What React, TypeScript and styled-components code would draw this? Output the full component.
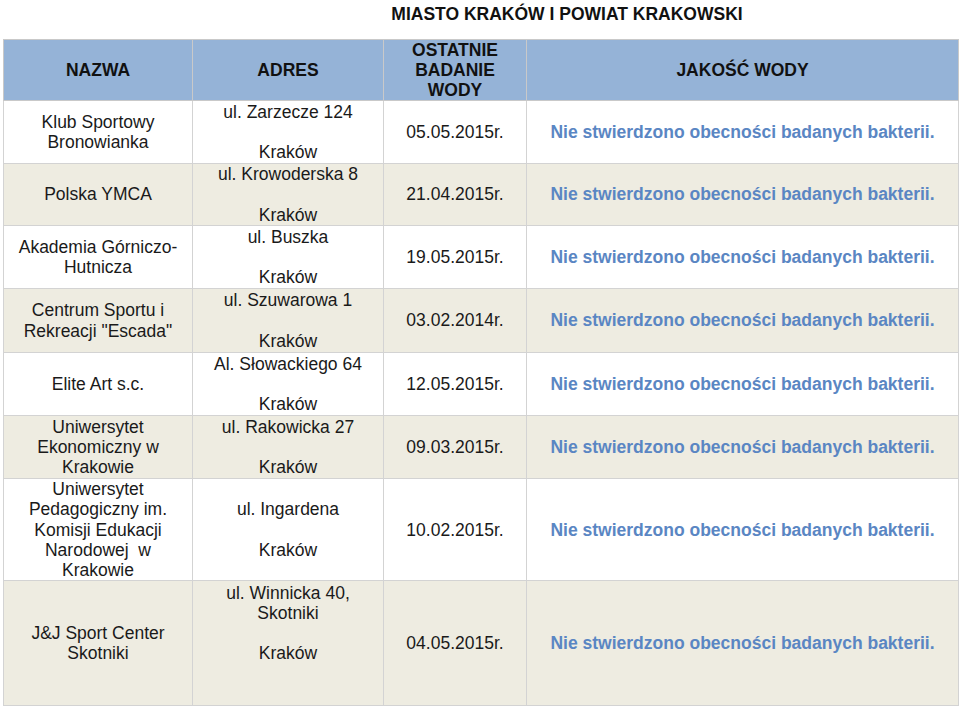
import React, { FC } from 'react'
import styled, { createGlobalStyle } from 'styled-components'

const GlobalStyle = createGlobalStyle`
  html, body {
    margin: 0;
    padding: 0;
    background: #ffffff;
  }
  body {
    font-family: "Liberation Sans", Arial, sans-serif;
  }
`

const Page = styled.div`
  width: 960px;
  height: 707px;
  padding: 4px 0 0 3px;
  box-sizing: border-box;
  overflow: hidden;
`

const Title = styled.div`
  padding-left: 171px;
  height: 20px;
  margin-bottom: 15px;
  text-align: center;
  font-size: 17.5px;
  line-height: 20px;
  font-weight: bold;
  color: #111111;
`

const Table = styled.table`
  border-collapse: collapse;
  table-layout: fixed;
  width: 955px;
  border: 1px solid #c9c9c9;
`

interface IRow {
    height: number,
    shaded?: boolean
}

const Row = styled.tr<IRow>`
  height: ${(props) => props.height}px;
  background: ${(props) => (props.shaded ? '#eeece1' : '#ffffff')};
`

const HeadRow = styled.tr`
  height: 61px;
  background: #95b3d7;
`

const HeadCell = styled.th`
  padding: 0 2px;
  border: 1px solid #c9c9c9;
  font-size: 17.5px;
  line-height: 20px;
  font-weight: bold;
  color: #111111;
  text-align: center;
  vertical-align: middle;
`

interface ICell {
    quality?: boolean
}

const Cell = styled.td<ICell>`
  padding: 0 2px;
  border: 1px solid #d3d3d3;
  font-size: 17.5px;
  line-height: 20.3px;
  font-weight: ${(props) => (props.quality ? 'bold' : 'normal')};
  color: ${(props) => (props.quality ? '#5a86c3' : '#1a1a1a')};
  text-align: center;
  vertical-align: middle;
  white-space: nowrap;
`

const QUALITY = 'Nie stwierdzono obecności badanych bakterii.'

const rows = [
    { name: ['Klub Sportowy', 'Bronowianka'], address: ['ul. Zarzecze 124', '', 'Kraków'], date: '05.05.2015r.', height: 63 },
    { name: ['Polska YMCA'], address: ['ul. Krowoderska 8', '', 'Kraków'], date: '21.04.2015r.', height: 62 },
    { name: ['Akademia Górniczo-', 'Hutnicza'], address: ['ul. Buszka', '', 'Kraków'], date: '19.05.2015r.', height: 63 },
    { name: ['Centrum Sportu i', 'Rekreacji "Escada"'], address: ['ul. Szuwarowa 1', '', 'Kraków'], date: '03.02.2014r.', height: 64 },
    { name: ['Elite Art s.c.'], address: ['Al. Słowackiego 64', '', 'Kraków'], date: '12.05.2015r.', height: 63 },
    { name: ['Uniwersytet', 'Ekonomiczny w', 'Krakowie'], address: ['ul. Rakowicka 27', '', 'Kraków'], date: '09.03.2015r.', height: 63 },
    {
        name: ['Uniwersytet', 'Pedagogiczny im.', 'Komisji Edukacji', 'Narodowej\u00a0\u00a0w', 'Krakowie'],
        address: ['ul. Ingardena', '', 'Kraków'],
        date: '10.02.2015r.',
        height: 101
    },
    { name: ['J&J Sport Center', 'Skotniki'], address: ['ul. Winnicka 40,', 'Skotniki', '', 'Kraków', '', ''], date: '04.05.2015r.', height: 125 }
]

const Lines: FC<{ lines: string[] }> = ({ lines }) => (
    <>
        {lines.map((line, i) => (
            <React.Fragment key={i}>
                {line || '\u00a0'}
                {i < lines.length - 1 && <br />}
            </React.Fragment>
        ))}
    </>
)

const App: FC = () => {
    return (
        <Page>
            <GlobalStyle />
            <Title>MIASTO KRAKÓW I POWIAT KRAKOWSKI</Title>
            <Table>
                <colgroup>
                    <col style={{ width: 189 }} />
                    <col style={{ width: 191 }} />
                    <col style={{ width: 143 }} />
                    <col style={{ width: 432 }} />
                </colgroup>
                <thead>
                    <HeadRow>
                        <HeadCell>NAZWA</HeadCell>
                        <HeadCell>ADRES</HeadCell>
                        <HeadCell>
                            OSTATNIE
                            <br />
                            BADANIE
                            <br />
                            WODY
                        </HeadCell>
                        <HeadCell>JAKOŚĆ WODY</HeadCell>
                    </HeadRow>
                </thead>
                <tbody>
                    {rows.map((row, i) => (
                        <Row key={row.date + i} height={row.height} shaded={i % 2 === 1}>
                            <Cell>
                                <Lines lines={row.name} />
                            </Cell>
                            <Cell>
                                <Lines lines={row.address} />
                            </Cell>
                            <Cell>{row.date}</Cell>
                            <Cell quality>{QUALITY}</Cell>
                        </Row>
                    ))}
                </tbody>
            </Table>
        </Page>
    )
}

export default App
